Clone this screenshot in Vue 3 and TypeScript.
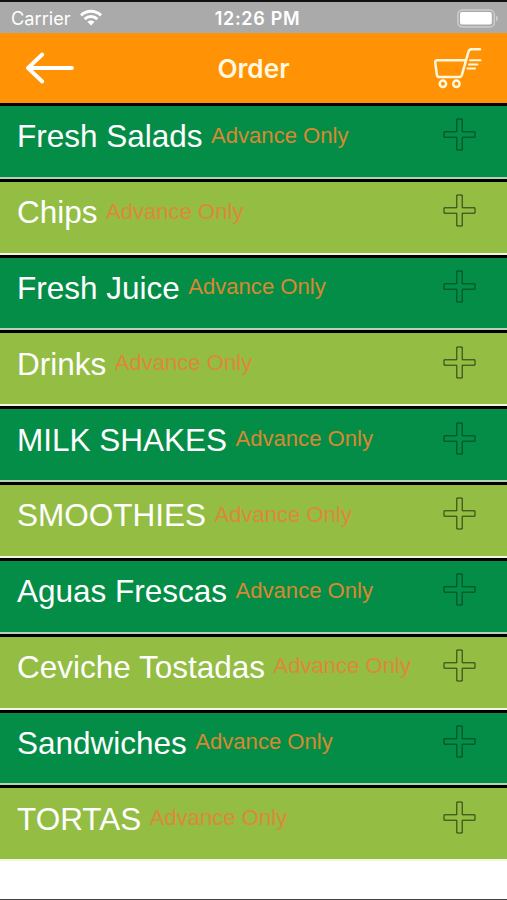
<script setup lang="ts">
interface Category {
  name: string
  note: string
}

const names: string[] = [
  'Fresh Salads',
  'Chips',
  'Fresh Juice',
  'Drinks',
  'MILK SHAKES',
  'SMOOTHIES',
  'Aguas Frescas',
  'Ceviche Tostadas',
  'Sandwiches',
  'TORTAS',
]

const categories: Category[] = names.map((name) => ({ name, note: 'Advance Only' }))
</script>

<template>
  <div class="screen">
    <div class="status">
      <div class="carrier">
        <span>Carrier</span>
        <svg class="wifi" width="24" height="18" viewBox="0 0 24 18">
          <g fill="none" stroke="#fff" stroke-width="2.9">
            <path d="M2 6.4C7.6 .9 16.4 .9 22 6.4" />
            <path d="M5.6 10.1C9.3 6.6 14.7 6.6 18.4 10.1" />
          </g>
          <path d="M8.4 12.8C10.5 11 13.5 11 15.6 12.8L12 16.5Z" fill="#fff" />
        </svg>
      </div>
      <div class="clock">12:26 PM</div>
      <div class="power">
        <svg width="42" height="19" viewBox="0 0 42 19">
          <rect x=".9" y=".9" width="36.4" height="17" rx="4.5" fill="none" stroke="#cdcdcd" stroke-width="1.5" />
          <rect x="3" y="3.1" width="31.8" height="12.5" rx="2" fill="#fff" />
          <path d="M39 6.6Q41 7.4 41 9.5T39 12.4Z" fill="#cdcdcd" />
        </svg>
      </div>
    </div>

    <header class="nav">
      <button class="icon-button back" aria-label="Back">
        <svg width="50" height="32" viewBox="0 0 50 32">
          <path d="M47 16H3M17.2 2.5L3 16L17.2 29.5" fill="none" stroke="#fff" stroke-width="3.8" stroke-linecap="round" stroke-linejoin="round" />
        </svg>
      </button>
      <h1>Order</h1>
      <button class="icon-button cart" aria-label="Cart">
        <svg width="50" height="42" viewBox="0 0 50 42">
          <g fill="none" stroke="#fff8df" stroke-width="2.5" stroke-linecap="round" stroke-linejoin="round">
            <path d="M33 13.3H4.2Q2 13.3 2.2 15.3L3.9 28Q4.2 30 6.2 30H26.2Q28.2 30 28.9 27.8L35.6 4.4Q36.4 2.3 38.5 2.3H47" />
            <circle cx="9.9" cy="36.8" r="3.2" />
            <circle cx="23.4" cy="36.8" r="3.2" />
            <path d="M37 13.3H47.5M36 17.5H44.5M34.5 21.5H42" stroke-width="2" />
          </g>
        </svg>
      </button>
    </header>

    <main class="list">
      <div v-for="item in categories" :key="item.name" class="row">
        <div class="label">
          <span class="name">{{ item.name }}</span>
          <span class="note">{{ item.note }}</span>
        </div>
        <svg class="plus" width="33" height="33" viewBox="0 0 33 33">
          <path d="M13.8 1H19.2V13.8H32V19.2H19.2V32H13.8V19.2H1V13.8H13.8Z" fill="none" stroke="#000" stroke-width="1" stroke-linejoin="round" />
        </svg>
      </div>
    </main>
  </div>
</template>

<style>
body {
  margin: 0;
  background: #fff;
}
</style>

<style scoped>
.screen {
  box-sizing: border-box;
  width: 507px;
  height: 900px;
  overflow: hidden;
  background: #fff;
  border-top: 2px solid #111;
  border-bottom: 1px solid #444;
  font-family: "Liberation Sans", Arial, sans-serif;
}

.status {
  display: grid;
  grid-template-columns: 1fr auto 1fr;
  align-items: center;
  box-sizing: border-box;
  height: 31px;
  padding: 1px 8px 0 11px;
  background: #aaa;
  color: #fff;
  font-family: Inter, sans-serif;
  font-size: 18.2px;
}

.carrier {
  display: flex;
  align-items: center;
  gap: 8px;
}

.wifi {
  margin-top: -1px;
}

.clock {
  margin-left: 5px;
  font-size: 18px;
  font-weight: 600;
  letter-spacing: 0.7px;
}

.power {
  display: flex;
  justify-content: flex-end;
}

.nav {
  display: grid;
  grid-template-columns: 1fr auto 1fr;
  align-items: center;
  height: 70px;
  padding: 0 24px;
  background: #ff9305;
}

.icon-button {
  display: flex;
  justify-self: start;
  padding: 0;
  border: 0;
  background: none;
}

.back {
  margin-left: 1px;
}

.cart {
  justify-self: end;
}

h1 {
  margin: 0;
  color: #fff8df;
  font-family: Inter, sans-serif;
  font-size: 26.2px;
  font-weight: 600;
}

.row {
  display: flex;
  justify-content: space-between;
  align-items: flex-start;
  box-sizing: border-box;
  height: 75.84px;
  padding: 12.2px 31px 0 17px;
  border-top: 3px solid #000;
  border-bottom: 2px solid #b5d3b4;
  background: #048d47;
}

.row:nth-child(even) {
  background: #93bd43;
  border-bottom-color: #f2f7df;
}

.label {
  display: flex;
  align-items: baseline;
  gap: 8.4px;
  white-space: nowrap;
}

.name {
  color: #fff;
  font-size: 31.5px;
  line-height: 37px;
}

.note {
  position: relative;
  top: -4.5px;
  color: #d98832;
  font-size: 22.1px;
}

.row:nth-child(even) .note {
  color: #dd8938;
}

.plus {
  flex: none;
  opacity: 0.5;
}

.row:nth-child(even) .plus {
  opacity: 0.7;
}
</style>
